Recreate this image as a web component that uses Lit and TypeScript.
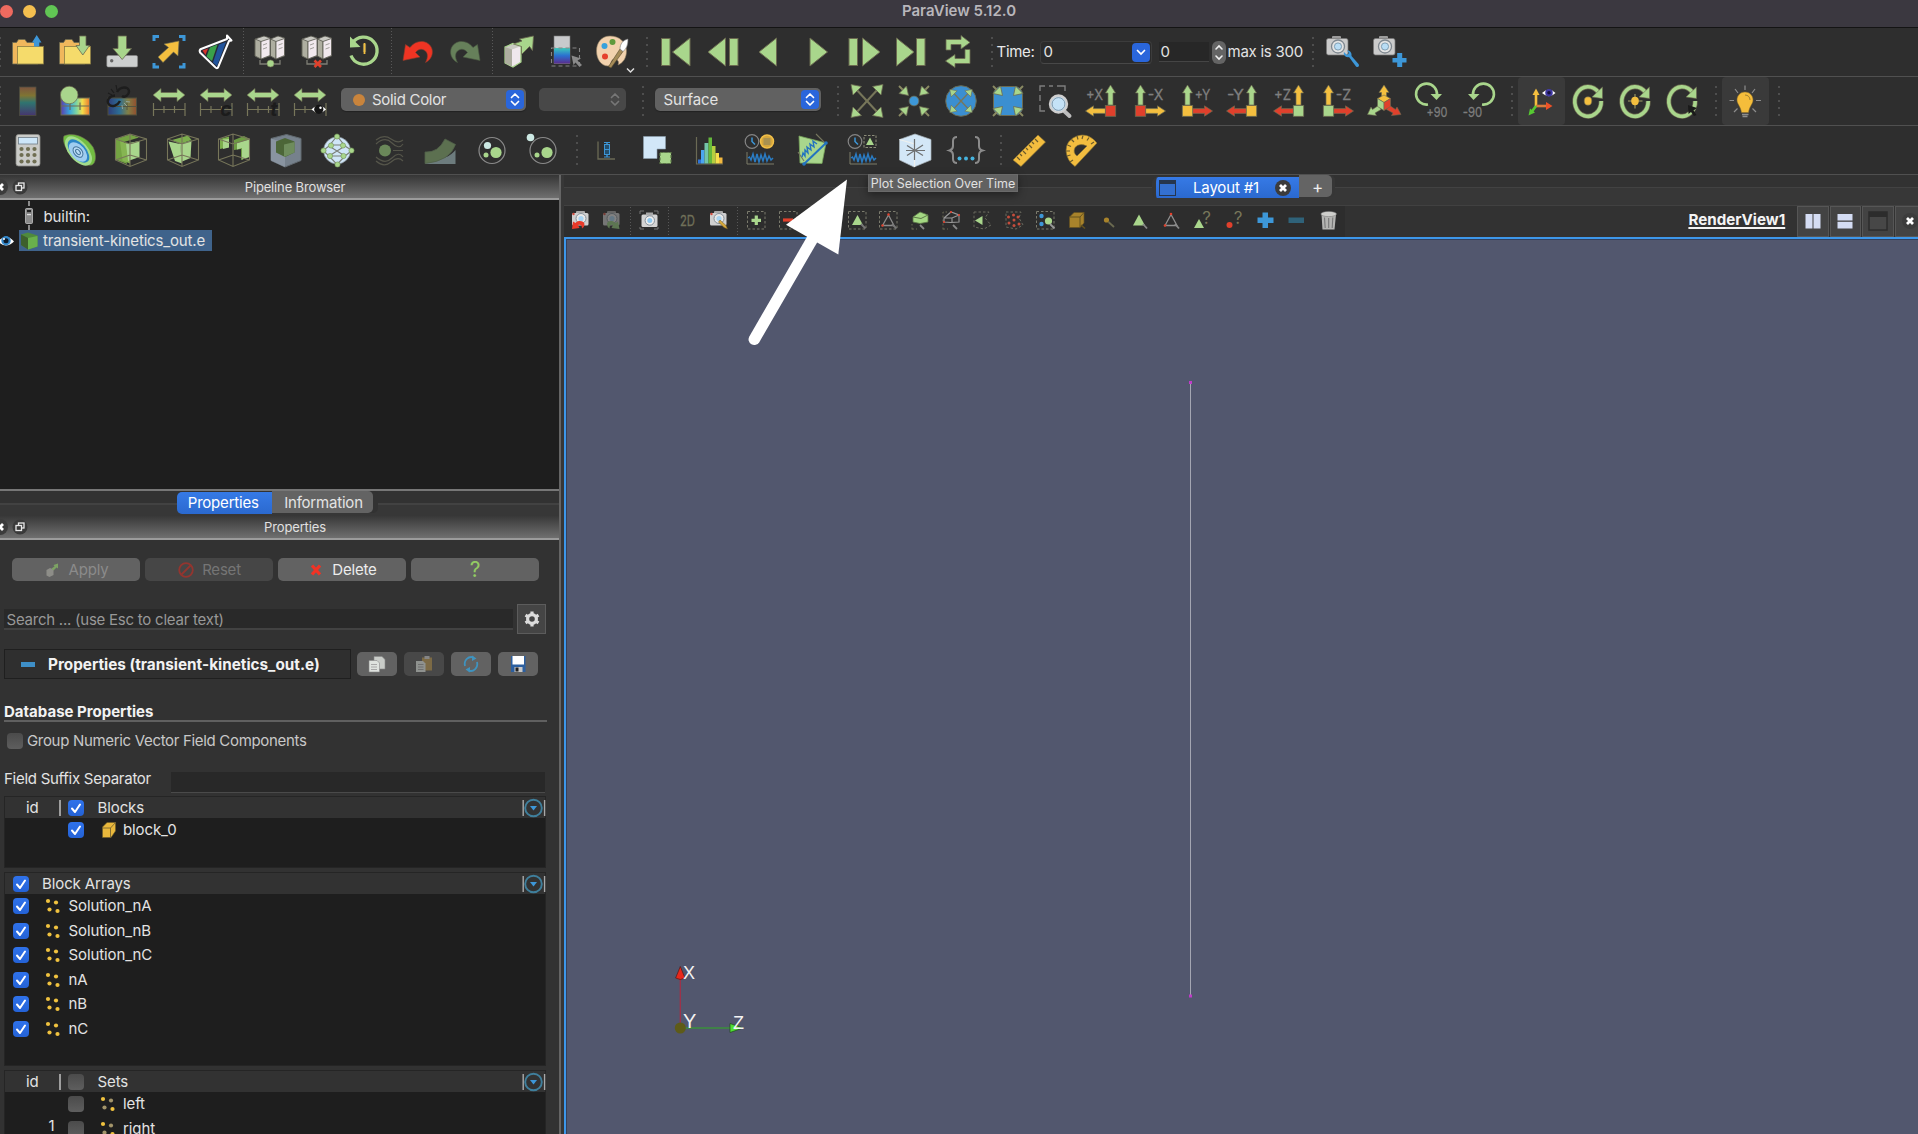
import { LitElement, html, css, svg, nothing, TemplateResult } from "lit";
import { customElement, property } from "lit/decorators.js";
import { classMap } from "lit/directives/class-map.js";

type Svg = TemplateResult;

const GREEN = "#a9d68c";
const EDGE = "#6b6a50";
const BLUE = "#3d97d8";
const GOLD = "#f4bf3f";
const RED = "#e0402c";

/* ---------- shared drawing pieces ---------- */

const servers = (): Svg => svg`
  <g stroke="#55554c" stroke-width=".8" stroke-linejoin="round">
    <path d="M5 7 L14 4 L20 6 L20 24 L11 27 L5 24Z" fill="#c9c9c2"/>
    <path d="M5 7 L11 9.5 L11 27 L5 24Z" fill="#aeaea0"/>
    <path d="M11 9.5 L20 6.500 L20 23.500 L11 27Z" fill="#f1e9ee"/>
    <path d="M20.500 7 L28 4 L34.500 6 L34.500 24 L26 27 L20.500 24Z" fill="#c9c9c2"/>
    <path d="M20.500 7 L26 9.500 L26 27 L20.500 24Z" fill="#aeaea0"/>
    <path d="M26 9.500 L34.500 6.500 L34.500 23.500 L26 27Z" fill="#f1e9ee"/>
    <path d="M13 13l4-1.500M13 17l4-1.500M28.500 13l4-1.500M28.500 17l4-1.500" stroke="#8b8b84"/>
  </g>
  <path d="M10 28V32H30V28" fill="none" stroke="#7d7d74" stroke-width="1.300"/>`;

const hArrow = (): Svg => svg`
  <path d="M4 14 L12 7.500 V11.500 H28 V7.500 L36 14 L28 20.500 V16.500 H12 V20.500Z" fill="${GREEN}" stroke="${EDGE}" stroke-width=".7"/>
  <path d="M4.500 22V35M36 22V35M4.500 28.500H36M15 25V32M25.500 25V32" stroke="#77765a" stroke-width="1.200" fill="none"/>`;

const axisView = (label: string, side: number, up: string, box: string, out: string): Svg => {
  const bx = side < 0 ? 28.5 : 11.5;
  const s = side;
  return svg`
    <path d="M${bx} 4 L${bx + 5} 12 H${bx + 2.5} V24 H${bx - 2.5} V12 H${bx - 5}Z" fill="${up}" stroke="${EDGE}" stroke-width=".7"/>
    <path d="M${bx + s * 5} 27.600 V32.400 H${bx + s * 17} V35.200 L${bx + s * 25} 30 L${bx + s * 17} 24.800 V27.600Z" fill="${out}" stroke="${EDGE}" stroke-width=".7"/>
    <rect x="${bx - 5.2}" y="24.500" width="10.400" height="10.800" fill="${box}" stroke="${EDGE}" stroke-width=".8"/>
    <text x="${side < 0 ? 12.5 : 26.5}" y="18.500" text-anchor="middle" font-size="14.500" fill="#7f7f7f" stroke="#7f7f7f" stroke-width=".3" textLength="${side < 0 ? 17 : 15.5}" lengthAdjust="spacingAndGlyphs">${label}</text>`;
};

const wireCube = (): Svg => svg`
  <path d="M4.500 9 L19 4 L35.500 9 V30 L19 36.500 L4.500 30Z M4.500 9 L19 14 L35.500 9 M19 14 V36.500 M19 4 V25 M19 25 L4.500 30 M19 25 L35.500 30" fill="none" stroke="#77765a" stroke-width="1.100"/>`;

const camera = (): Svg => svg`
  <rect x="10" y="4" width="9" height="4" rx="1" fill="#9c9c9c"/>
  <rect x="4.500" y="6.500" width="21.500" height="16.500" rx="2" fill="#cbcbcb" stroke="#777" stroke-width=".7"/>
  <circle cx="16" cy="14.500" r="6.500" fill="#e4e4e4" stroke="#7f8890" stroke-width="1.300"/>
  <circle cx="16" cy="14.500" r="3.600" fill="#b9ddf5" stroke="#6d8ea5" stroke-width=".8"/>`;

const smallCamera = (o: number): Svg => svg`
  <g opacity="${o}">
    <rect x="16" y="11" width="9" height="4" rx="1" fill="#aaa"/>
    <rect x="12" y="13" width="16.500" height="12.500" rx="1.500" fill="#d0d0d0"/>
    <circle cx="21" cy="18.500" r="5" fill="#e9e9e9" stroke="#87919a"/>
    <circle cx="21" cy="18.500" r="2.600" fill="#a8d4f2"/>
    <circle cx="13.500" cy="14" r="1.200" fill="#d24a3c"/>
  </g>`;

const clockPlot = (): Svg => svg`
  <circle cx="12" cy="11.500" r="6.800" fill="none" stroke="#858585" stroke-width="1.200"/>
  <path d="M12 7.500V11.500L15 14.500" fill="none" stroke="${BLUE}" stroke-width="1.500"/>
  <path d="M7 22V34H34" fill="none" stroke="#7d7d68" stroke-width="1"/>
  <path d="M8 28l1.500-1 1.500 3 2-6 2 8 2-8 2 8 2-7 2 6 2-7 2 7 2-5 2 4 2-2" fill="none" stroke="#2a7cc4" stroke-width="1.500"/>`;

const dashBox = (): Svg => svg`<rect x="11.500" y="11.500" width="17.500" height="17.500" fill="none" stroke="#7b7b6d" stroke-width="1" stroke-dasharray="2.500 2"/>`;

const orbit = (inner: Svg): Svg => svg`
  <path d="M30.500 11.500 A13.200 14.800 0 1 0 33.200 20" fill="none" stroke="${EDGE}" stroke-width="5"/>
  <path d="M30.500 11.500 A13.200 14.800 0 1 0 33.200 20" fill="none" stroke="${GREEN}" stroke-width="3.600"/>
  <path d="M34.500 6 L34.500 17.500 L24 16Z" fill="${GREEN}" stroke="${EDGE}" stroke-width=".6"/>${inner}`;

const corner = (sx: number, sy: number, inward: boolean): Svg => {
  const x = (v: number) => 20 + sx * v;
  const y = (v: number) => 20 + sy * v;
  return inward
    ? svg`<path d="M${x(15)} ${y(15)}L${x(10)} ${y(10)}" stroke="#8a8a62" stroke-width="2"/>
        <path d="M${x(5.500)} ${y(5.500)}L${x(7.500)} ${y(15)}L${x(15)} ${y(7.500)}Z" fill="${GREEN}" stroke="${EDGE}" stroke-width=".8"/>`
    : svg`<path d="M20 20L${x(12)} ${y(13)}" stroke="#77765a" stroke-width="2"/>
        <path d="M${x(16)} ${y(16.500)}L${x(5.500)} ${y(14.500)}L${x(14)} ${y(6)}Z" fill="${GREEN}" stroke="${EDGE}" stroke-width=".8"/>`;
};
const corners = (inward: boolean): Svg =>
  svg`${corner(-1, -1, inward)}${corner(1, -1, inward)}${corner(-1, 1, inward)}${corner(1, 1, inward)}`;

const play = (dir: number, cx: number): Svg =>
  svg`<path d="M${cx - dir * 8.5} 6 L${cx + dir * 9} 20 L${cx - dir * 8.5} 34Z" fill="${GREEN}" stroke="${EDGE}" stroke-width="1"/>`;
const bar = (x: number): Svg =>
  svg`<rect x="${x}" y="6.500" width="8.500" height="27" fill="${GREEN}" stroke="${EDGE}" stroke-width="1"/>`;

/* ---------- icon table, each on a 40 x 40 canvas ---------- */

const ICONS: Record<string, () => Svg> = {
  open: () => svg`
    <path d="M4.500 32V10.500H8.500L10.500 7.500H17L19 10.500H30V32Z" fill="#f0b75c" stroke="${EDGE}" stroke-width=".8"/>
    <rect x="9.500" y="14.500" width="26" height="17.500" fill="#f5db6b" stroke="#8a7d45" stroke-width=".8"/>
    <path d="M28.700 3L33.500 10.500H31.300V14.500H26V10.500H24Z" fill="${BLUE}"/>`,
  save: () => svg`
    <path d="M4.500 32V10.500H8.500L10.500 7.500H17L19 10.500H30V32Z" fill="#f0b75c" stroke="${EDGE}" stroke-width=".8"/>
    <rect x="9.500" y="14.500" width="26" height="17.500" fill="#f5db6b" stroke="#8a7d45" stroke-width=".8"/>
    <path d="M24.500 4H31V13.500H34.500L27.800 23L21 13.500H24.500Z" fill="${GREEN}" stroke="${EDGE}" stroke-width=".8"/>`,
  download: () => svg`
    <rect x="4.800" y="23.500" width="30.800" height="11.500" rx="1.500" fill="#cdcfcf" stroke="#888" stroke-width=".6"/>
    <circle cx="9.700" cy="28.800" r="1.700" fill="#666"/>
    <path d="M16 4H24.500V16.500H29.500L20.200 27.500L11 16.500H16Z" fill="${GREEN}" stroke="${EDGE}" stroke-width=".8"/>`,
  extract: () => svg`
    <path d="M5 9V4.500H10M30 4.500H35V9M35 31V35H30M10 35H5V31" fill="none" stroke="${BLUE}" stroke-width="3"/>
    <path d="M30 9L29 24L24.500 20L14 30.500L9 25L19.500 15.500L15 12Z" fill="${GOLD}" stroke="${EDGE}" stroke-width=".6"/>`,
  flask: () => svg`
    <path d="M31 3.500L35.500 8.500L33 9L22 35.500Q20.500 37 19 35L4 20.500Q3 18 5 17L31 7Z" fill="#282c38" stroke="#fff" stroke-width="2" stroke-linejoin="round"/>
    <path d="M6.500 18.500L12 16.500L9.500 23Z" fill="#d6342c"/><path d="M14 15.500L21.500 12.500L16 29L10.500 24.500Z" fill="#3aa14a"/>
    <path d="M23 12.500L30 10L21 34L17 30.500Z" fill="#22549c"/>`,
  connect: () => svg`${servers()}<circle cx="20.500" cy="31.500" r="3.600" fill="${GREEN}" stroke="${EDGE}" stroke-width=".6"/>`,
  disconnect: () => svg`${servers()}<path d="M17.500 28.500L24 35M24 28.500L17.500 35" stroke="${RED}" stroke-width="2.600"/>`,
  history: () => svg`
    <path d="M8.500 11A13.500 13.500 0 1 1 7 23.500" fill="none" stroke="${GREEN}" stroke-width="3.300"/>
    <path d="M6 4.500L6 15.500L16.500 15Z" fill="${GREEN}"/><path d="M20.500 12V20" stroke="#6b6a50" stroke-width="3.200"/><path d="M20.500 11V22" stroke="${GOLD}" stroke-width="1.800"/>`,
  undo: () => svg`<path d="M5 28.500L7.500 12.500L12 15.500C18 7 31 7.500 34 17C35.500 23 32.500 28 27.500 30.500C30.500 25 30 20 26 18C23 16.500 20 17.500 17.500 20.500L22 25Z" fill="#ef3423" stroke="#8a3c2c" stroke-width=".6"/>`,
  redo: () => svg`<g transform="translate(40 0) scale(-1 1)"><path d="M5 28.500L7.500 12.500L12 15.500C18 7 31 7.500 34 17C35.500 23 32.500 28 27.500 30.500C30.500 25 30 20 26 18C23 16.500 20 17.500 17.500 20.500L22 25Z" fill="#66805a" stroke="#4b5a43" stroke-width=".6"/></g>`,
  serverArrow: () => svg`
    <path d="M6 15L14 11.500L22 14V30L14 35L6 31Z" fill="#c9c9c2" stroke="${GREEN}" stroke-width="1.200"/>
    <path d="M6 15L13 17.500V34.500L6 31Z" fill="#aeaea0"/><path d="M13 17.500L21 14.500V30L13 34.500Z" fill="#efe8ec"/>
    <path d="M14.500 12L23 9L20.500 7L34.500 4L33.500 18.500L30.500 14.500L22.500 22.500V14.500Z" fill="${GREEN}" stroke="${EDGE}" stroke-width=".8"/>`,
  colorScale: () => svg`
    <defs><linearGradient id="lake" x1="0" y1="0" x2="0" y2="1"><stop offset="0" stop-color="#3cc9ba"/><stop offset=".5" stop-color="#2b6fd0"/><stop offset="1" stop-color="#5b2c8c"/></linearGradient></defs>
    <rect x="8" y="4" width="16" height="27.500" fill="#c9cacc" stroke="#777" stroke-width=".6"/>
    <rect x="8" y="16" width="16" height="15.500" fill="url(#lake)"/>
    <rect x="5.500" y="16" width="28" height="18" fill="none" stroke="#858585" stroke-width="1.100" stroke-dasharray="4 3"/>
    <path d="M25.500 23.500L35 26.500L31.500 28.500L36 33L33.500 35L29.500 30.500L27.500 33Z" fill="#8a8a8a"/>`,
  palette: () => svg`
    <path d="M17 4C8 4 3.500 11 3.500 19S8 34 15 34C19 34 17 29 20 27.500S27 29 25 33C30 31 33.500 26 33.500 19C33.500 10 26 4 17 4Z" fill="#f2d2ae" stroke="#8c7a60" stroke-width=".6"/>
    <circle cx="19.500" cy="10" r="3" fill="#5f9a3c"/><circle cx="11.500" cy="14" r="3" fill="#37a1dc"/><circle cx="12" cy="24.500" r="3" fill="#e5402c"/>
    <path d="M27 17L30 19.500L18 36L15.500 34.500Z" fill="#a58b58" stroke="#55482c" stroke-width=".6"/><path d="M27 17C27 12 30 8 35 7C35 13 33.500 17 30 19.500Z" fill="#fff" stroke="#777" stroke-width=".6"/>`,
  first: () => svg`${bar(5.5)}${play(-1, 25.5)}`,
  prev: () => svg`${play(-1, 14)}${bar(26.500)}`,
  reverse: () => svg`${play(-1, 18)}`,
  play: () => svg`${play(1, 21.5)}`,
  next: () => svg`${bar(5)}${play(1, 27)}`,
  last: () => svg`${play(1, 14)}${bar(25.500)}`,
  loop: () => svg`
    <path d="M8 18V7.500H23V3.500L32 10.500L23 17V12.500H13V18Z" fill="${GREEN}" stroke="${EDGE}" stroke-width=".8"/>
    <path d="M32 17.500V31.500H17V35.500L7.500 29L17 22.500V26.500H27V17.500Z" fill="${GREEN}" stroke="${EDGE}" stroke-width=".8"/>`,
  cameraTool: () => svg`${camera()}<path d="M22 20C21 23 24 26 27 25L34 34.500C36 36 38 34 36.500 32L29.500 24C30 21 28 18 25 18.500L27 21L25 23Z" fill="${BLUE}"/>`,
  cameraAdd: () => svg`${camera()}<path d="M28.200 21H33.200V26H37.500V30.500H33.200V35H28.200V30.500H23.500V26H28.200Z" fill="${BLUE}"/>`,

  legend: () => svg`<defs><linearGradient id="lg" x1="0" y1="0" x2="0" y2="1"><stop offset="0" stop-color="#7c5440"/><stop offset=".3" stop-color="#7f7433"/><stop offset=".55" stop-color="#2f7470"/><stop offset="1" stop-color="#46356e"/></linearGradient></defs>
    <rect x="11.500" y="6" width="16.500" height="28.500" fill="url(#lg)" stroke="#4e4e40" stroke-width=".8"/>`,
  editMap: () => svg`<defs><linearGradient id="rb" x1="0" x2="1" y1="0" y2="0"><stop offset="0" stop-color="#5a3fae"/><stop offset=".3" stop-color="#38a4dc"/><stop offset=".55" stop-color="#7fd6a0"/><stop offset=".75" stop-color="#f4dd4c"/><stop offset="1" stop-color="#e9792f"/></linearGradient></defs>
    <rect x="6" y="17" width="28.500" height="17" fill="url(#rb)" stroke="#6b6a50"/><path d="M6 25H34.500M15 21.500V29M25 21.500V29" stroke="#6d6c55" stroke-width="1.200"/>
    <circle cx="14.200" cy="14" r="8.800" fill="${GREEN}" stroke="${EDGE}" stroke-width=".7"/>`,
  separateMap: () => svg`
    <defs><linearGradient id="rb2" x1="0" x2="1" y1="0" y2="0"><stop offset="0" stop-color="#2f3f86"/><stop offset=".4" stop-color="#2c7aa8"/><stop offset=".7" stop-color="#8f8f4c"/><stop offset="1" stop-color="#a3542f"/></linearGradient></defs>
    <rect x="6" y="17" width="28.500" height="17" fill="url(#rb2)" stroke="#55543f" opacity=".85"/><path d="M6 25.500H34.500M25 22V29" stroke="#55543f"/>
    <g fill="none" stroke="#1d1d1d" stroke-width="2.400"><path d="M15 11C18 5 27 5 27 10.500C27 14 23 17 20 15"/><path d="M13 14.500C7 15 4 20 7 23.500C10 27 16 24 18 20"/></g>
    <path d="M9 8l3 4M14 4l1 5M6 12l4 2" stroke="#1d1d1d" stroke-width="1.200"/><path d="M22 22l3 3M20 24l.5 4M24 20.500l4 .5" stroke="#8fa49c" stroke-width="1"/>`,
  rescale: () => hArrow(),
  rescaleC: () => svg`${hArrow()}<text x="30" y="34.500" font-size="20" font-weight="bold" font-style="italic" text-anchor="middle" fill="#1c1c1c">c</text>`,
  rescaleT: () => svg`${hArrow()}<text x="31" y="34.500" font-size="20" font-weight="bold" font-style="italic" text-anchor="middle" fill="#1c1c1c">t</text>`,
  rescaleV: () => svg`${hArrow()}<path d="M21.500 28.500Q29 21 36 28.500Q29 35.500 21.500 28.500Z" fill="#fff"/><circle cx="28.800" cy="28.300" r="4.600" fill="#151515"/><circle cx="30.500" cy="26.800" r="1.200" fill="#fff"/>`,
  resetCamera: () => corners(false),
  zoomData: () => svg`<circle cx="20" cy="20" r="4.900" fill="${BLUE}" stroke="${EDGE}" stroke-width=".8"/>${corners(true)}`,
  resetClosest: () => svg`<circle cx="20" cy="20" r="15.300" fill="#3b8fd1" stroke="${EDGE}" stroke-width="1"/><g transform="translate(6 6) scale(.7)">${corners(false)}</g>`,
  zoomClosest: () => svg`<rect x="5.500" y="5.500" width="29" height="29" rx="8" fill="#3b8fd1" stroke="${EDGE}" stroke-width="1"/>${corners(true)}`,
  zoomBox: () => svg`<path d="M5 10V5H10M14 5H18M22 5H30V10M5 14V20M5 24V30H10" fill="none" stroke="#7e7e7e" stroke-width="1.400"/>
    <path d="M27.500 28.500L34.500 35" stroke="#bdbdbd" stroke-width="4" stroke-linecap="round"/><circle cx="23.500" cy="23" r="8.500" fill="#c4e2f7" stroke="#cfcfcf" stroke-width="2.400"/><circle cx="23.500" cy="23" r="6.400" fill="none" stroke="#70889a" stroke-width=".8"/>`,
  px: () => axisView("+X", -1, GREEN, RED, GOLD),
  mx: () => axisView("-X", 1, GREEN, RED, GOLD),
  py: () => axisView("+Y", 1, GREEN, GOLD, RED),
  my: () => axisView("-Y", -1, GREEN, GOLD, RED),
  pz: () => axisView("+Z", -1, GOLD, GREEN, RED),
  mz: () => axisView("-Z", 1, GOLD, GREEN, RED),
  iso: () => svg`<g stroke="${EDGE}" stroke-width=".6">
    <path d="M20 4L25 11.500H22.500V16H17.500V11.500H15Z" fill="${GOLD}"/>
    <path d="M3.500 33.500L7 26L8.500 28.500L14.500 24.500L17 28.500L11 32L12.500 34.500Z" fill="${GREEN}"/>
    <path d="M37 33.500L33 26L31.500 28.500L25 24L22.500 28.500L29 32L27.500 34.500Z" fill="${RED}"/>
    <path d="M20 14L26.500 17.500L20 21.500L13.500 17.500Z" fill="${GOLD}"/><path d="M13.500 17.500L20 21.500V29.500L13.500 25.500Z" fill="${GREEN}"/><path d="M26.500 17.500L20 21.500V29.500L26.500 25.500Z" fill="${RED}"/></g>`,
  rotP: () => svg`<path d="M17 23.500A10.500 10.500 0 1 1 26 14" fill="none" stroke="${GREEN}" stroke-width="2.600"/><path d="M19.500 13H31L25.500 19Z" fill="${GREEN}"/><text x="26" y="35.500" font-size="13.500" text-anchor="middle" fill="#7d7d7d" stroke="#7d7d7d" stroke-width=".3" textLength="21" lengthAdjust="spacingAndGlyphs">+90</text>`,
  rotM: () => svg`<path d="M24 23.500A10.500 10.500 0 1 0 15 14" fill="none" stroke="${GREEN}" stroke-width="2.600"/><path d="M10 13H21.500L15.500 19Z" fill="${GREEN}"/><text x="14.500" y="35.500" font-size="13.500" text-anchor="middle" fill="#7d7d7d" stroke="#7d7d7d" stroke-width=".3" textLength="19.500" lengthAdjust="spacingAndGlyphs">-90</text>`,
  axesEye: () => svg`<path d="M15 26V12" stroke="${GOLD}" stroke-width="2.600"/><path d="M15 7.500L18.500 14H11.500Z" fill="${GOLD}"/>
    <path d="M15 25H26" stroke="#d97a3c" stroke-width="2.600"/><path d="M31.500 25L25 21V29Z" fill="#ee5127"/>
    <path d="M15 25L10.500 31" stroke="#56c932" stroke-width="2.600"/><path d="M7.500 34.500L9 27.500L14 31.500Z" fill="#56c932"/>
    <path d="M21 12Q28 5 34.500 12Q28 18.500 21 12Z" fill="#fff"/><circle cx="28" cy="11.700" r="3.800" fill="#3e37a0"/><circle cx="28" cy="11.700" r="1.800" fill="#16123f"/>`,
  orbitCenter: () => orbit(svg`<ellipse cx="20" cy="20" rx="3.800" ry="4.200" fill="${GOLD}" stroke="${EDGE}" stroke-width=".6"/>`),
  orbitReset: () => orbit(svg`<path d="M20 13V27.500M13 20H27.500" stroke="#7c7a54" stroke-width="1.600"/><ellipse cx="20" cy="20" rx="3.800" ry="4.200" fill="${GOLD}"/>`),
  orbitPick: () => orbit(svg`<path d="M26 24L35 27L31.500 29.500L34.500 34L32 35L29 31L26.500 33Z" fill="#1a1a1a"/>`),
  bulb: () => svg`<g stroke="#8c8c8c" stroke-width="1.200"><path d="M20 4.500V9M10 8L13 12M30 8L27 12M4.500 19.500H9M31 19.500H36M9 31L12.500 27.500M31 31L27.500 27.500"/><path d="M17 33.500H23.500M17.500 35.500H22.500" stroke-width="1.500"/></g>
    <path d="M20 11C15.500 11 12 14.500 12 19C12 23 15.500 25 16.500 31.500H23.500C24.500 25 28 23 28 19C28 14.500 24.500 11 20 11Z" fill="#f5bd3b" stroke="#8a6f2c" stroke-width=".5"/><path d="M20 14C23 14 25 16 25 19" fill="none" stroke="#8a6f2c" stroke-width=".8"/>`,

  calc: () => svg`<rect x="8" y="4.500" width="24" height="31.500" rx="2.500" fill="#cacbc8" stroke="#8d8d88" stroke-width=".8"/><rect x="10.500" y="7.500" width="19" height="6.500" fill="#cde6f8" stroke="#6f7c86" stroke-width=".8"/>
    ${[19, 25, 31.5].map((y) => [13.5, 20, 26.5].map((x) => svg`<circle cx="${x}" cy="${y}" r="2.100" fill="#6f6e52"/>`))}`,
  contour: () => svg`<path d="M4 6C12 2 26 6 33 17C37 25 36 33 32 35C24 37 10 28 6 18C3 12 3 8 4 6Z" fill="#72bd42" stroke="${EDGE}" stroke-width=".6"/>
    <ellipse cx="18.500" cy="21" rx="9.500" ry="17.500" transform="rotate(-41 18.500 21)" fill="#a4dc8c"/><ellipse cx="18.500" cy="21" rx="7.500" ry="14" transform="rotate(-41 18.500 21)" fill="#2d87c6"/><ellipse cx="18" cy="22" rx="6.800" ry="11.500" transform="rotate(-41 18 22)" fill="#9fcdf0"/><ellipse cx="18" cy="22" rx="4" ry="6" transform="rotate(-41 18 22)" fill="#b9dcf6" stroke="#46759a" stroke-width="1"/><ellipse cx="18" cy="22" rx="1.800" ry="3" transform="rotate(-41 18 22)" fill="none" stroke="#46759a"/>`,
  clip: () => svg`<path d="M4.500 9L19 4.500L28 7.500L13 12L16 34L4.500 29.500Z" fill="#74a343"/><path d="M9 11L19 14.500V33.500L11.500 30.500Z" fill="#86b552"/><path d="M15 13.500L28.500 11V27L17 31Z" fill="${GREEN}"/>${wireCube()}`,
  slice: () => svg`<path d="M5.500 11.500L17 14L19 33.500L12 31Z" fill="#a9d68c"/><path d="M9 10L25 5.500L28.500 10L17 14Z" fill="#7cae4d"/><path d="M17 14L28.500 10.500L27.500 28L18 32Z" fill="${GREEN}"/>${wireCube()}`,
  threshold: () => svg`<path d="M6 9L15 6.500V17L6 19Z" fill="#7cae4d"/><path d="M9 9.500L15 9V17.500L9 19Z" fill="${GREEN}"/><path d="M20 10L30 6L35.500 9V27L27 30V19L20 20Z" fill="#6d9c43"/><path d="M23 13L35 9.500V27L28 29.500V18L23 19.500Z" fill="${GREEN}"/>${wireCube()}`,
  subset: () => svg`<path d="M5 8.500L20.500 4.500L35 8.500V30.500L19 37L5 30.500Z" fill="#76818c" stroke="#626a70"/><path d="M5 8.500L19 13L19 37L5 30.500Z" fill="#8994a0"/><path d="M10 11.500L19 8L28.500 11.500V22.500L19 27L10 22.500Z" fill="#4c6638"/><path d="M18 14.500L28.500 12V22.500L18 27Z" fill="#6e8c5c"/>`,
  glyph: () => svg`<circle cx="20" cy="20.500" r="13.500" fill="#cfe5f7" stroke="#7f8a8f" stroke-width=".7"/><path d="M20 6L12 16L6 20.500L12 26L20 34.500L28 26L35 20.500L28 16ZM12 16L28 26M28 16L12 26M14 15H27M14 26H27" fill="none" stroke="#7a7f78" stroke-width="1.100"/>
    ${[[20, 6.5], [6.5, 20.5], [34.5, 20.5], [20.500, 34.5], [14, 15.5], [26, 15.5], [13, 26], [26.500, 26]].map(([x, y]) => svg`<circle cx="${x}" cy="${y}" r="2.600" fill="#a9d68c" stroke="#6f9256" stroke-width=".6"/>`)}`,
  stream: () => svg`<g fill="none" stroke="#55554a" stroke-width="1.200"><path d="M7 10Q15 4 22 9T34 10M7 14Q16 6 23 13T34 14M7 27Q16 35 23 28T34 27M7 31Q15 38 22 32T34 31M24 20.500H34"/></g><circle cx="16" cy="20.500" r="6" fill="#6a8759"/>`,
  warp: () => svg`<path d="M5 34L35.500 34V20Q27 31 5 30Z" fill="#6d7c7e"/><path d="M5 22Q18 23 25 9L35.500 14.500Q30 31 5 33.500Z" fill="#5c7050" stroke="#50604a" stroke-width=".8"/>`,
  group: () => svg`<ellipse cx="20" cy="20.500" rx="13" ry="13" fill="none" stroke="#8a8a8a" stroke-width="1.200"/><circle cx="15.500" cy="15.500" r="3.600" fill="#cde9e4"/><circle cx="24" cy="22.500" r="5.600" fill="${GREEN}"/><circle cx="14" cy="25" r="2.500" fill="${GREEN}"/>`,
  extractGroup: () => svg`<ellipse cx="20" cy="20.500" rx="13" ry="13" fill="none" stroke="#8a8a8a" stroke-width="1.200"/><circle cx="7.500" cy="7.500" r="3.800" fill="#cde9e4"/><circle cx="24" cy="22.500" r="5.600" fill="${GREEN}"/><circle cx="14" cy="25" r="2.500" fill="${GREEN}"/>`,
  probe: () => svg`<path d="M12 11.500V29H29" fill="none" stroke="#6b6a55" stroke-width="1.300"/><path d="M21 12V27" stroke="${BLUE}" stroke-width="1.400"/><rect x="18.500" y="14.500" width="5" height="10" fill="#24506f" stroke="${BLUE}"/><path d="M18.500 19.500H23.500M18 12.500H24M18 27H24" stroke="${BLUE}"/>`,
  extractSel: () => svg`<path d="M6.500 6.500H28.500V19H20V28.500H6.500Z" fill="#d2e7f8" stroke="#8fa3b2" stroke-width=".6"/><rect x="23" y="22.500" width="11" height="11" fill="${GREEN}" stroke="#5d7848" stroke-width="1.200" stroke-dasharray="3 1.500"/>`,
  histogram: () => svg`<path d="M7.500 7V34H34" fill="none" stroke="#6b6a55" stroke-width="1.200"/><rect x="9" y="29.500" width="3" height="4" fill="#2f74d8"/><rect x="12" y="20" width="3.500" height="13.500" fill="#4aa5f0"/><rect x="15.500" y="13" width="4" height="20.500" fill="#74c4a8"/><rect x="19.500" y="7.500" width="3.500" height="26" fill="#64b83c"/><rect x="23" y="16" width="3.500" height="17.500" fill="#b5cf3f"/><rect x="26.500" y="23" width="3.500" height="10.500" fill="#f5e04c"/><rect x="30" y="27.500" width="3.500" height="6" fill="#f4b93f"/>`,
  plotData: () => svg`${clockPlot()}<circle cx="27" cy="11.500" r="6.500" fill="#d5a63c" stroke="#f1bf48" stroke-width="1.500"/><rect x="23.500" y="8" width="7" height="7" fill="#a99150"/>`,
  plotLine: () => svg`<path d="M7 6L34 13L30 33.500L8 33Z" fill="${GREEN}" stroke="#77a35a" stroke-width=".8"/><path d="M24 4L34 14M6 22L12 31" stroke="#76765e" stroke-width="1.100"/><path d="M12 34L34 13" stroke="#2373bf" stroke-width="2"/><circle cx="12" cy="34" r="1.800" fill="#2373bf"/><circle cx="34" cy="13" r="1.800" fill="#2373bf"/><path d="M10 27l1-4 2 3 0-6 3 3-1-6 4 3-1-6 4 3-1-6 4 3" fill="none" stroke="#2373bf" stroke-width="1.400"/>`,
  plotSel: () => svg`${clockPlot()}<rect x="21" y="5.500" width="12" height="12" fill="none" stroke="#8d8d7a" stroke-width="1" stroke-dasharray="2.500 1.500"/><path d="M27 7.500L31 15H23Z" fill="${GREEN}"/>`,
  python: () => svg`<path d="M4.500 9.500L20 4L36 9.500V30L19 37L4.500 30Z" fill="#d3e7f7" stroke="#a8b2b8" stroke-width=".7"/><path d="M4.500 9.500L19.500 14V37" fill="none" stroke="#eef0ee" stroke-width="1.300"/><path d="M19.500 9V30M12 15.500L28 25.500M28 15L12 25.500M11 20.500H30" stroke="#6e7071" stroke-width="1.200"/>`,
  braces: () => svg`<path d="M11 7Q7 7 7 11V16Q7 19.500 3.500 20.500Q7 21.500 7 25V29Q7 33 11 33M29 7Q33 7 33 11V16Q33 19.500 36.500 20.500Q33 21.500 33 25V29Q33 33 29 33" fill="none" stroke="#8b8b8b" stroke-width="2"/><circle cx="13.500" cy="28.500" r="2" fill="#46b3de"/><circle cx="20" cy="28.500" r="2" fill="#46b3de"/><circle cx="26.500" cy="28.500" r="2" fill="#46b3de"/>`,
  ruler: () => svg`<path d="M4 30L29 5L36.500 12L12 36.500Z" fill="#f3bd3f" stroke="#8a7434" stroke-width=".6"/><path d="M8 27l3 3M11 24l2 2M14 21l3 3M17 18l2 2M20 15l3 3M23 12l2 2M26 9l3 3" stroke="#6b5b2c" stroke-width="1.200"/>`,
  protractor: () => svg`<path fill-rule="evenodd" d="M36 13Q27 2 16 6Q5 10 5 21Q6 31 14 36.500ZM26 16L16 26Q11.500 23 14 17.500Q18 12.500 26 16Z" fill="#f3bd3f" stroke="#8a7434" stroke-width=".6"/><path d="M33 12l-3 2M28 7.500l-2 3M22 5.500l-1 3.500M16 6l1 3.500M10.500 9.500l2.500 2.500M6.500 15l3.500 1.500M5 21h4M6 26l3.500-1M9 32l3-2" stroke="#6b5b2c" stroke-width="1.200"/>`,

  camUndo: () => svg`${smallCamera(1)}<path d="M12 29L13 21.500L15.500 23C18.500 19.500 24 21 24.500 24Q24.500 27 22 28.500Q22 24 18 25L19.500 28Z" fill="#e83a2a"/>`,
  camRedo: () => svg`${smallCamera(0.45)}<path d="M28.500 29L27 21.500L24.500 23C21 19.500 16 21 16 24Q16 27 18.500 28.500Q18.500 24 22 25L20.500 28Z" fill="#5d7652"/>`,
  snap: () => svg`<path d="M11 14V11H15M25 11H29V14M29 27V29H25M15 29H11V27" fill="none" stroke="#777" stroke-width="1"/><rect x="12.500" y="14.500" width="16" height="12.500" rx="1.500" fill="#d4d4d4"/><rect x="17" y="12.500" width="7" height="3" fill="#aaa"/><circle cx="20.800" cy="20.500" r="4.700" fill="#efefef" stroke="#87919a"/><circle cx="20.800" cy="20.500" r="2.500" fill="#8fc8ef"/>`,
  twoD: () => svg`<text x="20.500" y="25.500" text-anchor="middle" font-size="14" fill="#707059" stroke="#707059" stroke-width=".3" textLength="15" lengthAdjust="spacingAndGlyphs">2D</text>`,
  camEdit: () => svg`${smallCamera(1)}<path d="M22 20L28 25.500L29.500 29L26 27.500L20.500 22Z" fill="#d7a93c" stroke="#6b5424" stroke-width=".5"/>`,
  selAdd: () => svg`${dashBox()}<path d="M20.300 15.500V25M15.500 20.300H25" stroke="${GREEN}" stroke-width="3.200"/>`,
  selSub: () => svg`${dashBox()}<path d="M15 20H25" stroke="${RED}" stroke-width="3.200"/>`,
  selCells: () => svg`${dashBox()}<path d="M20.500 15L26 25H15Z" fill="${GREEN}"/><path d="M24 24L28.500 28.500" stroke="#777" stroke-width="1.800"/>`,
  selPts: () => svg`${dashBox()}<path d="M20.500 15L26 25.500H14.500Z" fill="none" stroke="#8b8b8b" stroke-width="1.300"/><circle cx="20.500" cy="14.500" r="1.200" fill="${RED}"/><circle cx="14.500" cy="25.500" r="1.200" fill="${RED}"/><path d="M24 24L28.500 28.500" stroke="#777" stroke-width="1.800"/>`,
  fruCells: () => svg`<path d="M12 29.500V24M12 29H17" stroke="#6b6a55" stroke-dasharray="2 2"/><path d="M13 17L20 12L28 15V22L20 23.500L13 22Z" fill="#a4d883" stroke="#5d7848" stroke-width=".8"/><path d="M13 17L21 18.500L28 15" fill="none" stroke="#5d7848"/><path d="M20 25L24 29" stroke="#888" stroke-width="1.800"/>`,
  fruPts: () => svg`<path d="M12 29.500V12H16M12 29H17" stroke="#6b6a55" fill="none" stroke-dasharray="2 2"/><path d="M13 18L20 12L28 15V22L20 22.500L13 22ZM13 18L21 18L28 15M21 18V22.500" fill="none" stroke="#999" stroke-width="1.100"/><circle cx="20" cy="12" r="1.100" fill="${RED}"/><circle cx="28" cy="15" r="1.100" fill="${RED}"/><circle cx="13" cy="22" r="1.100" fill="${RED}"/><path d="M22 25L26 29" stroke="#888" stroke-width="1.800"/>`,
  polyCells: () => svg`<path d="M12 12H27L23 18L29 25L22 29L12 27Z" fill="none" stroke="#6b6b5f" stroke-dasharray="2.500 2"/><path d="M13 20.500L20.500 16V25Z" fill="${GREEN}"/>`,
  polyPts: () => svg`<path d="M12 12H27L25 18L29 25L22 29L12 27Z" fill="none" stroke="#6b6b5f" stroke-dasharray="2.500 2"/><g fill="#c54d3c"><circle cx="14.500" cy="17" r="1.500"/><circle cx="19.500" cy="15" r="1.500"/><circle cx="15" cy="23" r="1.500"/><circle cx="20" cy="20" r="1.500"/><circle cx="24" cy="17" r="1.500"/><circle cx="20" cy="25.500" r="1.500"/><circle cx="25" cy="24" r="1.500"/></g>`,
  blockSel: () => svg`${dashBox()}<circle cx="16.500" cy="16" r="2.200" fill="${BLUE}"/><circle cx="16.500" cy="24" r="2.200" fill="${BLUE}"/><circle cx="23.500" cy="21" r="3.600" fill="${GREEN}"/><path d="M25 24L29.500 28.500" stroke="#999" stroke-width="1.800"/>`,
  blockBox: () => svg`<path d="M12.500 17L17 12.500H27V23L23 27.500H12.500Z" fill="#a8832b" stroke="#65521f" stroke-width=".7"/><path d="M12.500 17H23V27.500M23 17L27 12.500" fill="none" stroke="#65521f"/><path d="M24 25L28 28.500" stroke="#65521f" stroke-width="1.500"/>`,
  interPt: () => svg`<circle cx="18.500" cy="20" r="2.600" fill="#a8832b"/><path d="M20.500 22L26 27" stroke="#6b6a50" stroke-width="1.800"/>`,
  hoverCell: () => svg`<path d="M20 14.500L26 25.500H14Z" fill="${GREEN}"/><path d="M24 24L28 28.500" stroke="#888" stroke-width="1.800"/>`,
  hoverPt: () => svg`<path d="M20 14.500L26 25.500H14Z" fill="none" stroke="#909090" stroke-width="1.300"/><circle cx="20" cy="14" r="1.300" fill="${RED}"/><circle cx="14" cy="25.500" r="1.300" fill="${RED}"/><path d="M24 24L28 28.500" stroke="#888" stroke-width="1.800"/>`,
  askCell: () => svg`<path d="M17 19L22 28H12Z" fill="${GREEN}"/><text x="24.500" y="24" font-size="17" text-anchor="middle" fill="#77765a">?</text>`,
  askPt: () => svg`<circle cx="15.500" cy="25" r="3" fill="${RED}"/><text x="24" y="24" font-size="17" text-anchor="middle" fill="#77765a">?</text>`,
  plus: () => svg`<path d="M17.500 12.500H23V17.500H28.500V23H23V28H17.500V23H12.500V17.500H17.500Z" fill="${BLUE}"/>`,
  minus: () => svg`<rect x="12.500" y="17.500" width="15.500" height="5.500" fill="#2f6279"/>`,
  trash: () => svg`<path d="M13.500 14.500H28L26.500 29.500H14.500Z" fill="#b4b4b2"/><ellipse cx="20.700" cy="14" rx="7.800" ry="2.600" fill="#cfcfcc" stroke="#777" stroke-width=".5"/><path d="M16.500 17.500L17.200 28M20.700 18V28M24.800 17.500L24.200 28" stroke="#777" stroke-width="1.100"/>`,

  applyI: () => svg`<path d="M13.500 20L17 18L20.500 19.500V25L16.500 27L13.500 25.500Z" fill="#8d8d88"/><path d="M18.500 18.500L21.500 16.500L20.500 15L25 13.500V18.500L23.500 17.500L20.500 20.500Z" fill="#7da364"/>`,
  resetI: () => svg`<circle cx="20" cy="20" r="6.800" fill="none" stroke="#93352f" stroke-width="1.800"/><path d="M24.500 15.500L15.500 24.500" stroke="#93352f" stroke-width="1.800"/>`,
  deleteI: () => svg`<path d="M16 15.500L24 24.500M24 15.500L16 24.500" stroke="#f23325" stroke-width="3.200"/>`,
  gear: () => svg`<circle cx="20" cy="20" r="4.400" fill="none" stroke="#dcdcdc" stroke-width="3.200"/><path d="M20 12.500V16M20 24V27.500M13.500 16.200L16.500 18M23.500 22L26.500 23.800M13.500 23.800L16.500 22M23.500 18L26.500 16.200" stroke="#dcdcdc" stroke-width="3.200"/>`,
  copy: () => svg`<path d="M17 12.500H25L28 15.500V25H17Z" fill="#c9ccc8" stroke="#888" stroke-width=".6"/><path d="M12 16.500H20L22.500 19V28H12Z" fill="#dfe3df" stroke="#888" stroke-width=".6"/><path d="M14 20.500H20M14 23H20M14 25.500H20" stroke="#999" stroke-width=".8"/>`,
  paste: () => svg`<path d="M18 13.500H28V26.500H18Z" fill="#7c6a45"/><rect x="20.500" y="12" width="5" height="3" fill="#858585"/><path d="M12 17H19L21.500 19.500V28H12Z" fill="#8f928f"/><path d="M14 20.500H19.500M14 23H19.500M14 25.500H19.500" stroke="#666" stroke-width=".8"/>`,
  refresh: () => svg`<path d="M14 22A6.500 7 0 0 1 22.500 13.500M26 18A6.500 7 0 0 1 17.500 26.500" fill="none" stroke="#3f93bf" stroke-width="1.800"/><path d="M21 11.500L25.500 14.500L21 17ZM19 28.500L14.500 25.500L19 23Z" fill="#3f93bf"/>`,
  floppy: () => svg`<rect x="13" y="12" width="14.500" height="16" fill="#2c5f9f"/><rect x="14.500" y="12" width="11.500" height="8.500" fill="#fff"/><rect x="16.500" y="23" width="8" height="5" fill="#c9c9c9"/><rect x="17.500" y="23.500" width="3" height="4" fill="#222"/>`,
  cubeY: () => svg`<path d="M13.500 17L18 12.500H26.500V21L22 27.500H13.500Z" fill="#e9b83c" stroke="#6c5a28" stroke-width=".6"/><path d="M13.500 18H21.500V27M21.500 18L26.500 12.500" fill="none" stroke="#7c6630" stroke-width=".9"/>`,
  cubeG: () => svg`<path d="M12 13.500L19 11.500L28.500 14.500V25.500L19.500 28.500L12 24Z" fill="#4f8a3c"/><path d="M12 13.500L19 17V28.500L12 24Z" fill="#3d5f2c"/><path d="M19 17L28.500 15V25.500L19 28.500Z" fill="#69b04c"/>`,
  serverS: () => svg`<rect x="16.500" y="12.500" width="7" height="15" rx="1" fill="#8b8b8b" stroke="#c2c2c2" stroke-width=".8"/><rect x="18" y="14" width="4" height="2.200" fill="#222"/><rect x="18" y="18" width="4" height="1.200" fill="#ddd"/>`,
  eye: () => svg`<path d="M12 20.500Q20 11 28 20.500Q20 28.500 12 20.500Z" fill="#fff"/><circle cx="20" cy="19.800" r="4.700" fill="#3387c9"/><circle cx="20" cy="19.800" r="2.500" fill="#0c1a2a"/><circle cx="18" cy="18" r="1" fill="#fff"/>`,
  dots: () => svg`<g fill="#f0c23f"><circle cx="14" cy="15" r="2.100"/><circle cx="22" cy="16.500" r="2.100"/><circle cx="15.500" cy="23.500" r="2.100"/><circle cx="23.500" cy="25" r="2.100"/></g>`,
  dotsDim: () => svg`<circle cx="14" cy="15" r="2.100" fill="#f0c23f"/><circle cx="22" cy="16.500" r="2.100" fill="#a3946a"/><circle cx="15.500" cy="23.500" r="2.100" fill="#a3946a"/><circle cx="23.500" cy="25" r="2.100" fill="#f0c23f"/>`,
  dropCircle: () => svg`<path d="M10.200 12V28M31.600 12V28" stroke="#a9a9a9" stroke-width="1.400"/><circle cx="20.500" cy="20" r="8.300" fill="none" stroke="#3f7f9c" stroke-width="1.900"/><path d="M17 18H24L20.500 22.500Z" fill="${BLUE}"/>`,
  splitV: () => svg`<rect x="12.500" y="13" width="7" height="14.500" fill="#d4dcf3"/><rect x="20.500" y="13" width="7" height="14.500" fill="#d4dcf3"/>`,
  splitH: () => svg`<rect x="12.500" y="13" width="15" height="6.500" fill="#d4dcf3"/><rect x="12.500" y="20.800" width="15" height="6.700" fill="#d4dcf3"/>`,
  maxi: () => svg`<rect x="11" y="11" width="18" height="18" fill="#474747" stroke="#2c2c2c" stroke-width="1.500"/><rect x="11" y="11" width="18" height="5" fill="#2c2c2c"/>`,
  closeX: () => svg`<circle cx="20" cy="20" r="8" fill="#3c3c3c"/><path d="M17 17L23 23M23 17L17 23" stroke="#fff" stroke-width="2.800"/>`,
  floatX: () => svg`<circle cx="20" cy="20" r="7.500" fill="#3a3a3a"/><rect x="18.500" y="16" width="5.500" height="5" fill="none" stroke="#e8e8e8" stroke-width="1.300"/><rect x="16" y="18.500" width="5.500" height="5" fill="#3a3a3a" stroke="#e8e8e8" stroke-width="1.300"/>`,
};

@customElement("pv-icon")
export class PvIcon extends LitElement {
  @property() name = "";
  static styles = css`
    :host { display: block; width: 40px; height: 40px; flex: none; }
    svg { display: block; width: 40px; height: 40px; font-family: Inter, "Liberation Sans", sans-serif; letter-spacing: 0; }
  `;
  render() {
    const draw = ICONS[this.name];
    return html`<svg viewBox="0 0 40 40">${draw ? draw() : nothing}</svg>`;
  }
}

@customElement("pv-check")
export class PvCheck extends LitElement {
  @property({ type: Boolean }) on = false;
  static styles = css`
    :host { display: block; width: 16px; height: 16px; flex: none; }
    .box { width: 16px; height: 16px; border-radius: 4px; background: linear-gradient(#4b4b4b, #5e5e5e); }
    .on { background: linear-gradient(#2f72ea, #2462d6); }
    svg { display: block; }
  `;
  render() {
    return html`<div class=${classMap({ box: true, on: this.on })}>
      ${this.on ? html`<svg width="16" height="16"><path d="M4 8.500L7 12L12 4.500" fill="none" stroke="#fff" stroke-width="2" stroke-linecap="round" stroke-linejoin="round"/></svg>` : nothing}
    </div>`;
  }
}

@customElement("app-root")
export class AppRoot extends LitElement {
  static styles = css`
    :host { display: block; width: 1918px; height: 1134px; overflow: hidden; background: #323232; color: #e3e3e3;
      font: 15px/20px Inter, "Liberation Sans", sans-serif; letter-spacing: -0.1px; white-space: nowrap; }
    * { box-sizing: border-box; }
    .app { display: grid; grid-template-rows: 28px 49px 49px 49px 1fr; height: 1134px; position: relative; }
    .title { display: grid; grid-template-columns: 200px 1fr 200px; background: #3b3840; border-bottom: 1px solid #141414; align-items: start; }
    .title b { text-align: center; font-size: 15px; font-weight: 600; color: #b8b6bb; line-height: 21px; letter-spacing: 0; }
    .lights { display: flex; gap: 9.500px; padding-top: 4.500px; }
    .light { width: 13px; height: 13px; border-radius: 50%; background: #ee6a5f; }
    .light.y { background: #f5bf4f; } .light.g { background: #61c554; }
    .bar { display: flex; align-items: center; background: #2e2e2e; border-bottom: 1px solid #505050; }
    .btn { width: 47px; height: 100%; display: flex; align-items: center; justify-content: center; flex: none; position: relative; }
    .wide .btn { width: 51.500px; }
    .btn.on { background: #3a3a3a; border-radius: 4px; }
    .chev { position: absolute; right: 2px; bottom: 2px; }
    .sep { width: 7px; height: 100%; flex: none; background: repeating-linear-gradient(#585858 0 1px, transparent 1px 3px) 3px 0 / 1px 100% no-repeat; }
    .grip { width: 2px; height: 31px; flex: none; margin: 0 4.500px 0 9.500px; background: repeating-linear-gradient(#4e4e4e 0 2px, transparent 2px 7px); }
    .grip.edge { margin: 0 4px 0 -1.500px; }
    .combo + .grip { margin-left: 16.500px; }
    .wide .grip { margin: 0 1.800px 0 7.500px; }
    .wide .grip.edge { margin: 0 1.800px 0 -1.500px; }
    .combo { height: 23px; border-radius: 5px; background: #616161; display: flex; align-items: center; padding: 0 2px 0 9px; box-shadow: 0 1px 1px #222; flex: none; letter-spacing: -0.100px; }
    .combo .lab { flex: 1; line-height: 24px; }
    .combo.c1 { width: 185px; margin: 0 0 3px 7px; padding-left: 12px; letter-spacing: -0.300px; }
    .combo.c2 { width: 87px; margin: 0 0 3px 13px; background: #484848; box-shadow: none; }
    .combo.c3 { width: 166px; margin: 0 0 3px 6px; }
    .dot { width: 12px; height: 12px; border-radius: 50%; background: #c9843c; margin-right: 7.500px; }
    .tip { width: 18px; height: 19px; border-radius: 4px; background: #2a66db; display: flex; align-items: center; justify-content: center; }
    .tip.off { background: none; }
    .tlabel { width: 42px; color: #e9e9e9; letter-spacing: -0.300px; margin-left: -1px; }
    .tcombo { width: 112px; height: 23px; background: #2b2b2b; border-radius: 4px; border: 1px solid #3c3c3c; border-bottom-color: #484848; display: flex; align-items: center; padding: 0 1px 0 3px; margin-left: 1px; }
    .tcombo span { flex: 1; }
    .tnum { width: 50px; height: 20px; background: #272727; border-bottom: 1px solid #454545; margin: 0 3px 0 7px; padding-left: 2px; line-height: 20px; }
    .step { width: 14px; height: 23px; border-radius: 6px; background: #646464; margin-right: 2px; display: flex; align-items: center; justify-content: center; }
    .max { width: 75px; letter-spacing: -0.250px; }

    .body { display: grid; grid-template-columns: 559px 2px 1fr; min-height: 0; }
    .split { background: #656565; }
    .left { display: grid; grid-template-rows: 25px 289px 26px 25px 1fr; min-width: 0; min-height: 0; overflow: hidden; }
    .dock { display: grid; grid-template-columns: 36px 1fr 5px; align-items: center; background: linear-gradient(#363636, #6f6f6f); border-bottom: 2px solid #9b9b9b; font-size: 13px; color: #e0e0e0; letter-spacing: -0.150px; height: 25px; }
    .dock span { text-align: center; line-height: 25px; height: 23px; }
    .dock .tools { display: flex; margin-left: -20px; height: 23px; align-items: center; }
    .dock pv-icon { margin-right: -20px; }
    .tree { background: #1e1e1e; padding-top: 5px; }
    .trow { display: flex; align-items: center; height: 22px; margin-bottom: 3px; position: relative; }
    .trow pv-icon { margin: -9px -10px; }
    .trow.root { padding-left: 18.500px; }
    .trow .txt { margin-left: 5px; padding-top: 1px; }
    .trow.root::before, .trow.root::after { content: ""; position: absolute; left: 28px; width: 1.500px; height: 5px; background: #8b8b8b; }
    .trow.root::before { top: -4px; } .trow.root::after { bottom: -3px; }
    .trow .sel { display: flex; align-items: center; background: #3f638b; height: 21px; width: 193px; margin-left: 3px; letter-spacing: -0.150px; }
    .trow .sel .txt { margin-left: 4px; padding: 0; }
    .trow.leaf { margin-left: -4px; height: 21px; margin-top: 1px; }
    .tabs { border-top: 2px solid #777; display: flex; align-items: flex-start; background: linear-gradient(#323232 0 12px, #424242 12px 14px, #373737 14px); padding-left: 175px; }
    .tab { height: 22px; line-height: 23px; background: #636363; border-radius: 0 5px 5px 0; width: 101px; text-align: center; box-shadow: 5px 0 0 #323232; letter-spacing: -0.200px; padding-left: 3px; }
    .tab.on { background: linear-gradient(#367ae6, #2b69cf); color: #fff; border-radius: 5px 0 0 5px; width: 94.500px; margin: 1px 0 0 2px; box-shadow: none; line-height: 22px; padding: 0 2px 0 0; }
    .props { padding: 18px 12px 0 4px; min-height: 0; overflow: hidden; }
    .acts { display: grid; grid-template-columns: repeat(4, 128px); gap: 5px; padding-left: 8px; }
    .act { height: 23px; border-radius: 5px; background: #626262; display: flex; align-items: center; justify-content: center; color: #8b8b8b; padding-right: 5px; letter-spacing: -0.200px; }
    .act pv-icon { margin: -9px -4px -9px -6px; }
    .act.dim { background: #464646; color: #757575; }
    .act.live { color: #ececec; }
    .act.q { color: #93cb63; font-size: 21px; padding: 0; }
    .search { display: flex; margin-top: 23px; height: 30px; align-items: center; }
    .search .inp { height: 21px; width: 509px; background: #292929; border-bottom: 2px solid #424242; color: #989898; line-height: 21px; padding-left: 2.500px; margin-right: 4px; letter-spacing: -0.240px; }
    .search .gear { width: 29px; height: 30px; background: #454545; border: 1px solid #5c5c5c; display: flex; align-items: center; justify-content: center; }
    .group { display: flex; margin-top: 15px; height: 30px; align-items: center; }
    .group .head { width: 347px; height: 30px; border: 1px solid #1f1f1f; display: flex; align-items: center; padding: 1px 0 0 16px; background: #2f2f2f; font-weight: 700; color: #f2f2f2; font-size: 15.300px; letter-spacing: 0; }
    .dash { width: 14px; height: 5px; background: #3e8fc7; margin-right: 13px; }
    .mini { width: 40.500px; height: 24px; border-radius: 5px; background: #626262; margin-left: 6.600px; display: flex; align-items: center; justify-content: center; }
    .mini.first { margin-left: 5.500px; }
    .mini.dim { background: #484848; }
    .dbp { font-weight: 700; color: #f2f2f2; border-bottom: 2px solid #606060; margin-top: 22px; height: 21px; line-height: 21px; font-size: 15px; letter-spacing: 0; }
    .grp { display: flex; align-items: center; gap: 4.500px; margin-top: 9px; height: 20px; padding-left: 2.500px; color: #c8c8c8; letter-spacing: -0.320px; }
    .suffix { display: flex; align-items: center; margin-top: 18px; height: 22px; }
    .suffix span { width: 167px; line-height: 20px; margin-top: -2px; letter-spacing: -0.270px; }
    .suffix i { width: 374px; height: 21px; background: #282828; border-bottom: 1px solid #4a4a4a; margin-top: 4px; }
    .table { background: #1e1e1e; border: 1px solid #252525; width: 542px; margin-top: 4px; }
    .table.t1 { height: 72px; margin-top: 5px; } .table.t2 { height: 194px; } .table.t3 { height: 80px; }
    .th, .tr { display: grid; align-items: center; grid-template-columns: 62.500px 30px 1fr 40px; height: 21px; }
    .th { background: #323232; }
    .tr { height: 24.500px; }
    .flat .th, .flat .tr { grid-template-columns: 8px 30px 1fr 40px; }
    .flat .th > span { margin-left: -1px; }
    .th .id { padding-left: 21px; display: flex; justify-content: space-between; padding-right: 7px; }
    .th .id::after { content: ""; width: 1.500px; height: 16px; background: #9e9e9e; margin-top: 2px; }
    .th pv-icon { margin: -10px -8px -10px -10px; justify-self: end; }
    .tr pv-icon { margin: -8px -10px -8px -8px; }
    .tr .nm { display: flex; align-items: center; gap: 4.500px; grid-column: 3 / 5; margin-left: -1px; }
    .tr .num { text-align: right; padding-right: 13px; margin-top: -5px; }

    .right { display: grid; grid-template-rows: 30px 32px 1fr; padding-left: 3px; background: #373737; min-width: 0; min-height: 0; }
    .ltabs { display: flex; align-items: flex-start; background: linear-gradient(#323232 0 12px, #424242 12px 13px, #373737 13px); padding-left: 588px; }
    .ltab { display: flex; align-items: center; width: 147px; height: 21px; margin-top: 2px; padding-left: 7px; border-left: 4px solid #363636; background: linear-gradient(#367ae6, #2b69cf); border-radius: 6px 0 0 5px; color: #fff; letter-spacing: -0.150px; }
    .ltab .win { width: 17px; height: 16px; border: 1.500px solid #26364e; border-top-width: 4px; margin-left: -4px; background: #3470d0; }
    .ltab .nm { margin-left: 17px; flex: 1; }
    .ltab pv-icon { margin-right: -4px; }
    .addtab { width: 33px; height: 22px; background: #646464; border-radius: 0 5px 5px 0; text-align: center; line-height: 24px; font-size: 17px; padding-left: 4px; color: #eee; box-shadow: 3px 0 0 #363636; }
    .vbar { display: flex; background: #323232; border-top: 1px solid #414141; align-items: stretch; }
    .vtools { display: flex; width: 781px; background: #2d2d2d; align-items: center; flex: none; }
    .vb { width: 31.400px; display: flex; justify-content: center; flex: none; }
    .vtools .sep { width: 6.500px; height: 29px; margin-top: -1px; }
    .vb pv-icon { margin: -8px -5px -5px -5px; }
    .rv { margin-left: auto; font-weight: 700; text-decoration: underline; text-underline-offset: 2px; text-decoration-thickness: 1.500px; color: #f4f4f4; line-height: 28px; margin-right: 12px; font-size: 15.200px; letter-spacing: 0; }
    .vw { width: 31.300px; height: 31px; margin-right: 1.200px; border: 1px solid #565656; background: #434343; display: flex; align-items: center; justify-content: center; flex: none; }
    .vw pv-icon { margin-top: -2px; }
    .vw.end { margin-right: -8px; }
    .view { border: solid #3d97ea; border-width: 2px 0 0 2px; background: #52576e; box-shadow: inset 1px 1px 0 #33405c; overflow: hidden; min-height: 0; }
    .view svg { display: block; }
    .tooltip { position: absolute; left: 868px; top: 174px; width: 150px; height: 18px; background: #616161; border: 1px solid #6a6a6a; color: #e0e0e0; font-size: 12.500px; line-height: 17px; text-align: center; letter-spacing: -0.050px; box-shadow: 0 3px 8px #0006; }
    .pointer { position: absolute; left: 740px; top: 170px; }
  `;

  private icon(n: string) { return html`<pv-icon name=${n}></pv-icon>`; }

  private tools(names: string[], on: string[] = []) {
    return names.map((n) =>
      n === "|" ? html`<div class="sep"></div>`
        : n === ":" ? html`<div class="grip"></div>`
        : html`<div class=${classMap({ btn: true, on: on.includes(n) })}>${this.icon(n)}${n === "palette"
            ? html`<svg class="chev" width="9" height="7"><path d="M1 1.500L4.500 5L8 1.500" fill="none" stroke="#ddd" stroke-width="1.500"/></svg>` : nothing}</div>`);
  }

  private updown(color = "#fff") {
    return html`<svg width="10" height="15"><path d="M1.500 5.500L5 2L8.500 5.500M1.500 9.500L5 13L8.500 9.500" fill="none" stroke=${color} stroke-width="1.700" stroke-linecap="round" stroke-linejoin="round"/></svg>`;
  }

  private dock(label: string) {
    return html`<div class="dock"><div class="tools">${this.icon("closeX")}${this.icon("floatX")}</div><span>${label}</span></div>`;
  }

  private viewport() {
    return html`<svg width="1352" height="895">
      <line x1="624.500" y1="143" x2="624.500" y2="757" stroke="#a4a6b2" stroke-width="1"/>
      <rect x="623" y="142" width="3" height="3" fill="#c03cc8"/><rect x="623" y="755.500" width="3" height="3" fill="#c03cc8"/>
      <line x1="114.300" y1="738" x2="114.300" y2="788" stroke="#a03248" stroke-width="1.300"/>
      <path d="M114.300 727.500L119 739Q114.300 742 109.600 739Z" fill="#e8281c" stroke="#501818" stroke-width=".7"/>
      <line x1="114" y1="789" x2="165" y2="789" stroke="#3b8f3c" stroke-width="1.400"/>
      <path d="M164 784.500L177 789L164 793.500Z" fill="#4fdc34" stroke="#1d4a18" stroke-width=".7"/>
      <circle cx="114.300" cy="789" r="5.500" fill="#5e5b18"/>
      <g fill="#f4f4f4" font-family="Liberation Sans, sans-serif" letter-spacing="0"><text x="117" y="740" font-size="18">X</text><text x="117" y="789" font-size="20">Y</text><text x="167" y="790" font-size="18">Z</text></g>
    </svg>`;
  }

  render() {
    return html`<div class="app">
      <div class="title"><div class="lights"><i class="light"></i><i class="light y"></i><i class="light g"></i></div><b>ParaView 5.12.0</b></div>

      <div class="bar"><div class="grip edge"></div>
        ${this.tools(["open", "save", "download", "extract", "flask", "|", "connect", "disconnect", "history", "|", "undo", "redo", "|", "serverArrow", "colorScale", "palette", ":", "first", "prev", "reverse", "play", "next", "last", "loop", ":"])}
        <span class="tlabel">Time:</span>
        <div class="tcombo"><span>0</span><div class="tip"><svg width="10" height="7"><path d="M1.500 1.500L5 5L8.500 1.500" fill="none" stroke="#fff" stroke-width="1.700" stroke-linecap="round"/></svg></div></div>
        <div class="tnum">0</div><div class="step"><svg width="10" height="19"><path d="M2 6L5 3L8 6M2 13L5 16L8 13" fill="none" stroke="#f0f0f0" stroke-width="1.600" stroke-linecap="round"/></svg></div>
        <span class="max">max is 300</span>${this.tools([":", "cameraTool", "cameraAdd"])}
      </div>

      <div class="bar"><div class="grip edge"></div>
        ${this.tools(["legend", "editMap", "separateMap", "rescale", "rescaleC", "rescaleT", "rescaleV"])}
        <div class="combo c1"><i class="dot"></i><span class="lab">Solid Color</span><div class="tip">${this.updown()}</div></div>
        <div class="combo c2"><span class="lab"></span><div class="tip off">${this.updown("#777")}</div></div>
        ${this.tools([":"])}
        <div class="combo c3"><span class="lab">Surface</span><div class="tip">${this.updown()}</div></div>
        ${this.tools([":", "resetCamera", "zoomData", "resetClosest", "zoomClosest", "zoomBox", "px", "mx", "py", "my", "pz", "mz", "iso", "rotP", "rotM", ":", "axesEye", "orbitCenter", "orbitReset", "orbitPick", ":", "bulb", ":"], ["axesEye", "bulb"])}
      </div>

      <div class="bar wide"><div class="grip edge"></div>
        ${this.tools(["calc", "contour", "clip", "slice", "threshold", "subset", "glyph", "stream", "warp", "group", "extractGroup", ":", "probe", "extractSel", "histogram", "plotData", "plotLine", "plotSel", "python", "braces", ":", "ruler", "protractor"])}
      </div>

      <div class="body">
        <div class="left">
          ${this.dock("Pipeline Browser")}
          <div class="tree">
            <div class="trow root">${this.icon("serverS")}<span class="txt">builtin:</span></div>
            <div class="trow leaf">${this.icon("eye")}<div class="sel">${this.icon("cubeG")}<span class="txt">transient-kinetics_out.e</span></div></div>
          </div>
          <div class="tabs"><div class="tab on">Properties</div><div class="tab">Information</div></div>
          ${this.dock("Properties")}
          <div class="props">
            <div class="acts">
              <div class="act">${this.icon("applyI")}Apply</div>
              <div class="act dim">${this.icon("resetI")}Reset</div>
              <div class="act live">${this.icon("deleteI")}Delete</div>
              <div class="act q">?</div>
            </div>
            <div class="search"><div class="inp">Search ... (use Esc to clear text)</div><div class="gear">${this.icon("gear")}</div></div>
            <div class="group"><div class="head"><i class="dash"></i>Properties (transient-kinetics_out.e)</div>
              <div class="mini first">${this.icon("copy")}</div><div class="mini dim">${this.icon("paste")}</div><div class="mini">${this.icon("refresh")}</div><div class="mini">${this.icon("floppy")}</div></div>
            <div class="dbp">Database Properties</div>
            <div class="grp"><pv-check></pv-check>Group Numeric Vector Field Components</div>
            <div class="suffix"><span>Field Suffix Separator</span><i></i></div>
            <div class="table t1">
              <div class="th"><div class="id">id</div><pv-check on></pv-check><span>Blocks</span>${this.icon("dropCircle")}</div>
              <div class="tr"><span></span><pv-check on></pv-check><div class="nm">${this.icon("cubeY")}<span>block_0</span></div></div>
            </div>
            <div class="table t2 flat">
              <div class="th"><span></span><pv-check on></pv-check><span>Block Arrays</span>${this.icon("dropCircle")}</div>
              ${["Solution_nA", "Solution_nB", "Solution_nC", "nA", "nB", "nC"].map((t) => html`
                <div class="tr"><span></span><pv-check on></pv-check><div class="nm">${this.icon("dots")}<span>${t}</span></div></div>`)}
            </div>
            <div class="table t3">
              <div class="th"><div class="id">id</div><pv-check></pv-check><span>Sets</span>${this.icon("dropCircle")}</div>
              <div class="tr"><span></span><pv-check></pv-check><div class="nm">${this.icon("dotsDim")}<span>left</span></div></div>
              <div class="tr"><span class="num">1</span><pv-check></pv-check><div class="nm">${this.icon("dotsDim")}<span>right</span></div></div>
            </div>
          </div>
        </div>
        <div class="split"></div>
        <div class="right">
          <div class="ltabs"><div class="ltab"><i class="win"></i><span class="nm">Layout #1</span>${this.icon("closeX")}</div><div class="addtab">+</div></div>
          <div class="vbar">
            <div class="vtools">
              ${["camUndo", "camRedo", "|", "snap", "|", "twoD", "camEdit", "|", "selAdd", "selSub", "", "|", "selCells", "selPts", "fruCells", "fruPts", "polyCells", "polyPts", "blockSel", "blockBox", "interPt", "hoverCell", "hoverPt", "askCell", "askPt", "plus", "minus", "trash"].map((n) =>
                n === "|" ? html`<div class="sep"></div>` : html`<div class="vb">${this.icon(n)}</div>`)}
            </div>
            <span class="rv">RenderView1</span>
            <div class="vw">${this.icon("splitV")}</div><div class="vw">${this.icon("splitH")}</div><div class="vw">${this.icon("maxi")}</div><div class="vw end">${this.icon("closeX")}</div>
          </div>
          <div class="view">${this.viewport()}</div>
        </div>
      </div>

      <div class="tooltip">Plot Selection Over Time</div>
      <svg class="pointer" width="120" height="185"><path d="M14.300 169.300L73 68" stroke="#fff" stroke-width="11.500" stroke-linecap="round"/><path d="M107 9.500L46 54.800L98.300 84.500Z" fill="#fff"/></svg>
    </div>`;
  }
}
